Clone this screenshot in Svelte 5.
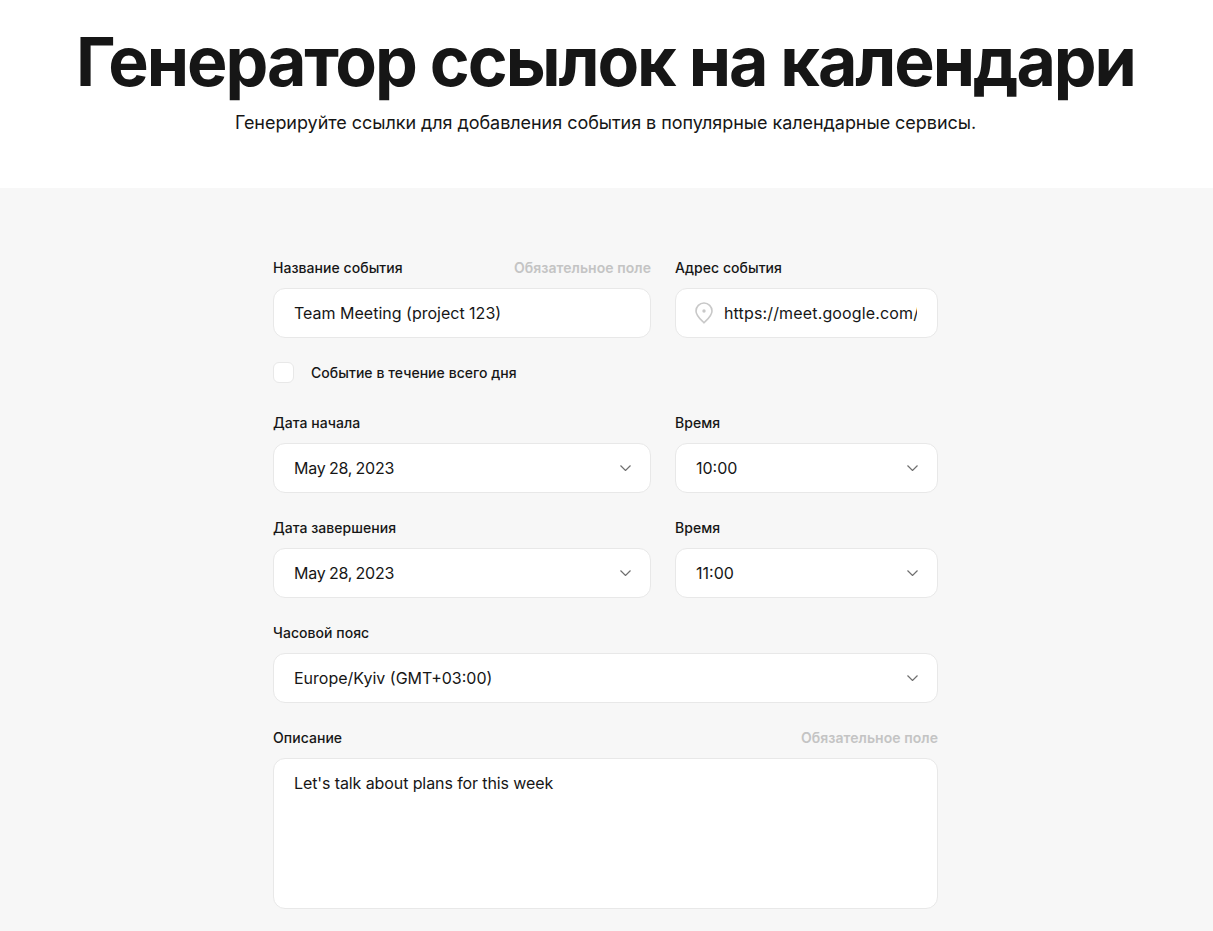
<script>
  const chevron = "M.5.5l5 5 5-5";
</script>

<header class="hero">
  <h1>Генератор ссылок на календари</h1>
  <p>Генерируйте ссылки для добавления события в популярные календарные сервисы.</p>
</header>

<main class="panel">
  <form class="form">
    <div class="field">
      <div class="label-row">
        <label for="title">Название события</label>
        <span class="required">Обязательное поле</span>
      </div>
      <input id="title" class="control" value="Team Meeting (project 123)" />
    </div>
    <div class="field">
      <div class="label-row"><label for="addr">Адрес события</label></div>
      <div class="control with-icon">
        <svg class="pin" width="18" height="22" viewBox="0 0 18 22" fill="none">
          <path d="M9 20.800C7.800 19.300 1 14.400 1 9a8 8 0 0 1 16 0c0 5.400-6.800 10.300-8 11.800z" stroke="#c8c8c8" stroke-width="1.600" stroke-linejoin="round" />
          <circle cx="9" cy="9" r="1.700" fill="#c8c8c8" />
        </svg>
        <input id="addr" value="https://meet.google.com/abc-defg-hij" />
      </div>
    </div>

    <label class="check wide">
      <span class="box"></span>
      Событие в течение всего дня
    </label>

    <div class="field">
      <div class="label-row"><span>Дата начала</span></div>
      <div class="control select"><span class="date">May 28, 2023</span>
        <svg width="11" height="6" viewBox="0 0 11 6" fill="none"><path d={chevron} stroke="#6f6f6f" stroke-width="1.200" /></svg>
      </div>
    </div>
    <div class="field">
      <div class="label-row"><span>Время</span></div>
      <div class="control select">10:00
        <svg width="11" height="6" viewBox="0 0 11 6" fill="none"><path d={chevron} stroke="#6f6f6f" stroke-width="1.200" /></svg>
      </div>
    </div>

    <div class="field">
      <div class="label-row"><span>Дата завершения</span></div>
      <div class="control select"><span class="date">May 28, 2023</span>
        <svg width="11" height="6" viewBox="0 0 11 6" fill="none"><path d={chevron} stroke="#6f6f6f" stroke-width="1.200" /></svg>
      </div>
    </div>
    <div class="field">
      <div class="label-row"><span>Время</span></div>
      <div class="control select">11:00
        <svg width="11" height="6" viewBox="0 0 11 6" fill="none"><path d={chevron} stroke="#6f6f6f" stroke-width="1.200" /></svg>
      </div>
    </div>

    <div class="field wide">
      <div class="label-row"><span>Часовой пояс</span></div>
      <div class="control select">Europe/Kyiv (GMT+03:00)
        <svg width="11" height="6" viewBox="0 0 11 6" fill="none"><path d={chevron} stroke="#6f6f6f" stroke-width="1.200" /></svg>
      </div>
    </div>

    <div class="field wide">
      <div class="label-row">
        <label for="desc">Описание</label>
        <span class="required">Обязательное поле</span>
      </div>
      <textarea id="desc" class="control area">Let's talk about plans for this week</textarea>
    </div>
  </form>
</main>

<style>
  :global(body) {
    font-family: Inter, "Noto Sans", sans-serif;
    color: #161616;
    background: #f7f7f7;
  }
  .hero {
    height: 188px;
    background: #fff;
    text-align: center;
    box-sizing: border-box;
    padding: 22px 2px 0 0;
  }
  h1 {
    margin: 0;
    font-size: 68px;
    line-height: 78px;
    font-weight: 700;
    letter-spacing: -2.070px;
  }
  .hero p {
    margin: 10px 0 0;
    font-size: 18px;
    line-height: 26px;
    letter-spacing: -0.05px;
  }
  .panel {
    background: #f7f7f7;
    padding: 70px 2px 22px 0;
  }
  .form {
    width: 665px;
    margin: 0 auto;
    display: grid;
    grid-template-columns: 378px 263px;
    column-gap: 24px;
    row-gap: 25px;
  }
  .wide {
    grid-column: 1 / -1;
  }
  .label-row {
    display: flex;
    justify-content: space-between;
    height: 20px;
    margin-bottom: 10px;
    font-size: 14px;
    line-height: 20px;
    font-weight: 500;
    letter-spacing: 0.05px;
  }
  .required {
    color: #c4c4c4;
    font-weight: 600;
  }
  .control {
    display: block;
    width: 100%;
    height: 50px;
    box-sizing: border-box;
    border: 1px solid #e8e8e8;
    border-radius: 12px;
    background: #fff;
    padding: 0 20px;
    font: inherit;
    font-size: 16px;
    line-height: 48px;
    color: #161616;
    outline: none;
  }
  .with-icon {
    display: flex;
    align-items: center;
    gap: 11px;
    padding: 0 20px 0 19px;
  }
  .pin {
    flex: none;
  }
  .with-icon input {
    flex: 1;
    min-width: 0;
    border: 0;
    padding: 0;
    outline: none;
    font: inherit;
    font-size: 16px;
    letter-spacing: 0.15px;
    color: #161616;
  }
  .select {
    display: flex;
    justify-content: space-between;
    align-items: center;
    padding-right: 19px;
  }
  .date {
    letter-spacing: -0.2px;
    word-spacing: -1px;
  }
  .check {
    display: flex;
    align-items: center;
    gap: 17px;
    height: 22px;
    margin: -2px 0 5px;
    font-size: 14px;
    font-weight: 500;
    letter-spacing: 0.05px;
  }
  .box {
    width: 21px;
    height: 21px;
    box-sizing: border-box;
    background: #fff;
    border: 1px solid #e8e8e8;
    border-radius: 6px;
  }
  .area {
    height: 151px;
    padding-top: 12px;
    line-height: 24px;
    letter-spacing: -0.1px;
    resize: none;
  }
</style>
